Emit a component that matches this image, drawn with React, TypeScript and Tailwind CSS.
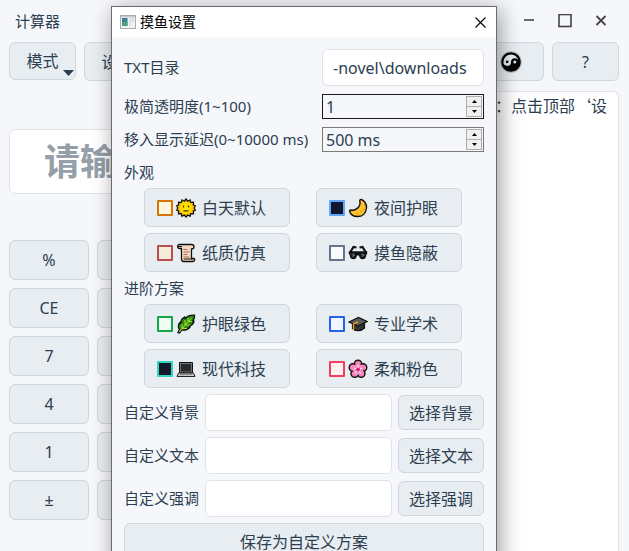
import { ReactNode, useState } from "react";

const keys = ["%", "CE", "7", "4", "1", "±"];

type Preset = {
  name: string;
  swatch: string;
  icon: ReactNode;
};

const Icon = ({ children }: { children: ReactNode }) => (
  <svg viewBox="0 0 20 20" className="w-5 h-5 shrink-0" aria-hidden="true">
    {children}
  </svg>
);

const Sun = () => (
  <Icon>
    <path
      d="M10 1l1.600 2.200L14 1.900l.7 2.500 2.800-.2-.2 2.700 2 .9-1.100 2.200 1.100 2.200-2 .9.2 2.700-2.800-.1-.7 2.500-2.400-1.200L10 19l-1.600-2-2.400 1.200-.7-2.500-2.800.1.2-2.700-2-.9L1.800 10 .7 7.800l2-.9-.2-2.700 2.800.2.7-2.500 2.400 1.300z"
      fill="#ffc800"
      stroke="#111"
      strokeWidth="1.3"
    />
    <circle cx="10" cy="10" r="5.5" fill="#ffe000" />
    <path d="M7.500 7.500v2M12.500 7.500v2M7.500 12.800h5" stroke="#4a3200" strokeWidth="1.2" />
  </Icon>
);

const Scroll = () => (
  <Icon>
    <path
      d="M3.500 1.500h12c2 0 2.500 1 2.500 2.500s-1 2-2.500 2v9.500H18c1 0 1 3-1.500 3h-9c-1.800 0-2-1-2-2.500V5.500H3.500c-2.500 0-2.500-4 0-4z"
      fill="#f8d9c4"
      stroke="#111"
      strokeWidth="1.3"
    />
    <path d="M2 3.500h4M7.500 16h9" stroke="#111" strokeWidth="1" />
    <path d="M7.500 6.500h4M7.500 9h6M7.500 11.500h4M7.500 14h6" stroke="#a0705a" strokeWidth="1" />
  </Icon>
);

const Moon = () => (
  <Icon>
    <path
      d="M13 1.500c2 .3 6 3.500 5.500 8.500-.5 5-4 8.500-9 8.500-4 0-7-2-8-5.500 0-.8.5-1 1.300-1 4.500 1 10.500-3 9-9-.1-.8.2-1.500 1.200-1.500z"
      fill="#ffc22e"
      stroke="#111"
      strokeWidth="1.4"
    />
    <path d="M16 6.500l.8 1M16.500 11l-1 1M12.500 13l1 1M9 16l1-.5" stroke="#e98a00" strokeWidth="1.3" />
  </Icon>
);

const Glasses = () => (
  <Icon>
    <path
      d="M2 9.500l3.500-5.500 3 .5M18 9.500l-3.500-5.500-3 .5"
      fill="none"
      stroke="#111"
      strokeWidth="2.2"
    />
    <path
      d="M.8 8.200h18.400v2.500l-.8 1c-.3 3-1.500 4.600-3.900 4.600-2.200 0-3.200-1.600-3.500-3.800H9c-.3 2.200-1.300 3.800-3.500 3.800-2.400 0-3.600-1.600-3.900-4.600l-.8-1z"
      fill="#111"
    />
    <path
      d="M3.300 11.500l3-.5M4 13.500l3-1.500M13 11.500l3-.5M13.500 13.500l3-1.500"
      stroke="#6e6e6e"
      strokeWidth="1.1"
    />
  </Icon>
);

const Leaf = () => (
  <Icon>
    <path
      d="M2 18.500l1.500-3C1.500 13 2.500 10 4 8.500l1 1.500c-.5-3 1-5.500 3.500-7l.8 1.500C11 2 14.500 1 18.500 1.200c.3 2-.3 4-1.500 5.300l1 .8c-.8 2.500-2.500 4.200-4.500 4.700l.5 1c-2 2.500-5.500 3.500-8.500 3l-2 3z"
      fill="#1d8f14"
      stroke="#111"
      strokeWidth="1.4"
    />
    <path
      d="M3 18L15.500 4M6 14V9.500M6 14.500h5M9 11V6M9.500 11h5M12 7.500V4M12.500 7.500H16"
      fill="none"
      stroke="#b5cf2b"
      strokeWidth="1.1"
    />
  </Icon>
);

const Laptop = () => (
  <Icon>
    <rect x="3" y="3" width="14" height="11.500" rx="1" fill="#111" />
    <rect x="4.500" y="4.500" width="11" height="8.500" fill="#2a2a2a" stroke="#888" strokeWidth=".8" />
    <path d="M2.500 14h15l1.500 3.500H1z" fill="#c6c6c6" stroke="#222" strokeWidth="1" />
    <path d="M4 15.500h12" stroke="#888" strokeWidth="1" />
  </Icon>
);

const Cap = () => (
  <Icon>
    <path
      d="M4.500 8v6.500c2.500 3 8.500 3 12-.5V8z"
      fill="#333"
      stroke="#111"
      strokeWidth="1.2"
    />
    <path d="M1 8l9.500-4.500L19 7.500 10 12z" fill="#5c5c5c" stroke="#111" strokeWidth="1.2" />
    <path d="M10 7.800L5.500 10v6" fill="none" stroke="#e8a71d" strokeWidth="1.3" />
  </Icon>
);

const Blossom = () => (
  <Icon>
    <g fill="#f783bd" stroke="#111" strokeWidth="1.4">
      <circle cx="10" cy="5" r="3.8" />
      <circle cx="15" cy="8.500" r="3.8" />
      <circle cx="13.200" cy="14.500" r="3.8" />
      <circle cx="6.800" cy="14.500" r="3.8" />
      <circle cx="5" cy="8.500" r="3.8" />
    </g>
    <circle cx="10" cy="10.300" r="5.5" fill="#f88fc3" />
    <path
      d="M10 10.500V6M10 10.500l4-1.500M10 10.500l2.500 4M10 10.500l-2.500 4M10 10.500L6 9"
      stroke="#fff"
      strokeWidth=".9"
    />
    <circle cx="10" cy="10.500" r="2" fill="#d6247f" />
  </Icon>
);

const YinYang = () => (
  <svg viewBox="0 0 22 22" className="w-[22px] h-[22px]" aria-hidden="true">
    <circle cx="11" cy="11" r="11" fill="#c3c5c7" />
    <circle cx="11" cy="11" r="9.8" fill="#000" />
    <path d="M3.400 11a7.600 7.600 0 0 1 15.200 0 3.800 3.800 0 0 0-7.600 0 3.800 3.800 0 0 1-7.600 0z" fill="#e9edf1" />
    <circle cx="7.200" cy="10.800" r="1.4" fill="#000" />
    <circle cx="14.800" cy="11" r="1.5" fill="#e9edf1" />
  </svg>
);

const appearance: Preset[] = [
  { name: "白天默认", swatch: "border-[#d97706] bg-[#fef7e0]", icon: <Sun /> },
  { name: "夜间护眼", swatch: "border-[#60a5fa] bg-[#0f172a]", icon: <Moon /> },
  { name: "纸质仿真", swatch: "border-[#b94f4f] bg-[#f4ecd8]", icon: <Scroll /> },
  { name: "摸鱼隐蔽", swatch: "border-[#64748b] bg-[#f8fafc]", icon: <Glasses /> },
];

const advanced: Preset[] = [
  { name: "护眼绿色", swatch: "border-[#16a34a] bg-[#f0fdf4]", icon: <Leaf /> },
  { name: "专业学术", swatch: "border-[#2563eb] bg-[#eff6ff]", icon: <Cap /> },
  { name: "现代科技", swatch: "border-[#2dd4bf] bg-[#111827]", icon: <Laptop /> },
  { name: "柔和粉色", swatch: "border-[#f43f5e] bg-[#fff1f2]", icon: <Blossom /> },
];

const customs = [
  { id: "background", label: "自定义背景", action: "选择背景" },
  { id: "text", label: "自定义文本", action: "选择文本" },
  { id: "accent", label: "自定义强调", action: "选择强调" },
];

const PresetGrid = ({ presets }: { presets: Preset[] }) => (
  <div className="grid grid-cols-2 gap-x-[26px] gap-y-[6px] pl-5 pr-[22px]">
    {presets.map((preset) => (
      <button
        key={preset.name}
        className="h-[39px] flex items-center pl-3 rounded-md border border-[#ced6de] bg-[#e8edf1] text-base"
      >
        <span className={`w-4 h-4 mr-[3px] border-2 rounded-[1px] ${preset.swatch}`}></span>
        {preset.icon}
        <span className="ml-[6px]">{preset.name}</span>
      </button>
    ))}
  </div>
);

type SpinProps = {
  id: string;
  initial: number;
  step: number;
  suffix?: string;
  border: string;
};

const SpinBox = ({ id, initial, step, suffix = "", border }: SpinProps) => {
  const [value, setValue] = useState(initial);

  return (
    <div className={`w-[162px] h-[25px] flex items-center border pr-px ${border}`}>
      <input
        id={id}
        className="flex-1 min-w-0 pl-[3px] text-base leading-5 bg-transparent outline-none"
        value={`${value}${suffix}`}
        onChange={(e) => setValue(parseInt(e.target.value) || 0)}
      />
      <div className="w-4 flex flex-col border border-[#adadad] bg-[#f0f0f0]">
        <button
          aria-label="增加"
          className="h-[10px] flex items-center justify-center border-b border-[#adadad]"
          onClick={() => setValue(value + step)}
        >
          <svg viewBox="0 0 5 3" className="w-[5px] h-[3px]">
            <path d="M0 3L2.500 0 5 3z" fill="#000" />
          </svg>
        </button>
        <button
          aria-label="减少"
          className="h-[9px] flex items-center justify-center"
          onClick={() => setValue(value - step)}
        >
          <svg viewBox="0 0 5 3" className="w-[5px] h-[3px]">
            <path d="M0 0h5L2.500 3z" fill="#000" />
          </svg>
        </button>
      </div>
    </div>
  );
};

const SettingsDialog = () => {
  return (
    <div
      role="dialog"
      aria-label="摸鱼设置"
      className="absolute left-[111px] top-[6px] w-[386px] border border-[#6b6b6b] bg-[#f5f7fb] shadow-[3px_4px_20px_rgba(0,0,0,0.4)]"
    >
      <div className="h-[30px] flex items-center bg-white text-black pl-2 pr-[10px]">
        <svg viewBox="0 0 16 14" className="w-4 h-[14px]" aria-hidden="true">
          <rect x=".5" y=".5" width="15" height="13" fill="#f2f2f2" stroke="#a9adb3" />
          <rect x="1" y="1" width="14" height="1.500" fill="#c3c8ce" />
          <rect x="2" y="3" width="5.500" height="8" fill="#3f7f9c" />
          <rect x="2" y="7" width="5.500" height="4" fill="#4fa277" />
          <rect x="9" y="3" width="2.500" height="8" fill="#dfe2e5" />
          <rect x="12" y="3" width="2" height="4" fill="#c9e6cf" />
        </svg>
        <h2 className="ml-1 text-sm">摸鱼设置</h2>
        <button aria-label="关闭" className="ml-auto">
          <svg viewBox="0 0 11 11" className="w-[11px] h-[11px]">
            <path d="M.5.5l10 10M10.500.5l-10 10" stroke="#000" strokeWidth="1.1" />
          </svg>
        </button>
      </div>

      <div className="px-3 py-3 text-[15px]">
        <div className="flex flex-col gap-2">
          <div className="flex items-center justify-between">
            <label htmlFor="dir">TXT目录</label>
            <input
              id="dir"
              className="w-[162px] h-[37px] px-[10px] rounded-md border border-[#dfe3e8] bg-white text-base"
              defaultValue="-novel\downloads"
            />
          </div>
          <div className="flex items-center justify-between">
            <label htmlFor="opacity">极简透明度(1~100)</label>
            <SpinBox id="opacity" initial={1} step={1} border="border-[#1a1a1a]" />
          </div>
          <div className="flex items-center justify-between">
            <label htmlFor="delay" className="whitespace-nowrap">
              移入显示延迟(0~10000 ms)
            </label>
            <SpinBox id="delay" initial={500} step={50} suffix=" ms" border="border-[#7a7a7a]" />
          </div>
        </div>

        <h3 className="mt-2 mb-1 leading-6">外观</h3>
        <PresetGrid presets={appearance} />

        <h3 className="my-1 leading-6">进阶方案</h3>
        <PresetGrid presets={advanced} />

        <div className="mt-[6px] flex flex-col gap-[6px]">
          {customs.map((custom) => (
            <div key={custom.id} className="flex items-center gap-[6px]">
              <label htmlFor={custom.id}>{custom.label}</label>
              <input
                id={custom.id}
                className="flex-1 min-w-0 h-[37px] px-[10px] rounded-md border border-[#dfe3e8] bg-white text-base"
              />
              <button className="w-[86px] h-[35px] rounded-md border border-[#ced6de] bg-[#e8edf1] text-base">
                {custom.action}
              </button>
            </div>
          ))}
          <button className="h-[37px] rounded-md border border-[#ced6de] bg-[#e8edf1] text-base">
            保存为自定义方案
          </button>
        </div>
      </div>
    </div>
  );
};

const App = () => {
  return (
    <div
      lang="zh-CN"
      className="relative h-screen overflow-hidden flex flex-col bg-[#f5f7fb] text-[#2c3e50] font-['Noto_Sans','Noto_Sans_CJK_SC',sans-serif]"
    >
      <header className="h-[42px] shrink-0 flex items-center pl-[15px] pr-[22px]">
        <h1 className="text-[15px]">计算器</h1>
        <div className="ml-auto flex items-center gap-[23px] text-[#444]">
          <button aria-label="最小化">
            <svg viewBox="0 0 12 14" className="w-3 h-[14px]">
              <path d="M1 6h10" stroke="currentColor" strokeWidth="1.6" />
            </svg>
          </button>
          <button aria-label="最大化">
            <svg viewBox="0 0 14 14" className="w-[14px] h-[14px]">
              <rect x="1" y="0.500" width="12" height="12" fill="none" stroke="currentColor" strokeWidth="1.6" />
            </svg>
          </button>
          <button aria-label="关闭窗口">
            <svg viewBox="0 0 12 12" className="w-3 h-3">
              <path d="M1.500 1l9 9M10.500 1l-9 9" stroke="currentColor" strokeWidth="1.8" />
            </svg>
          </button>
        </div>
      </header>

      <nav className="shrink-0 flex gap-2 pl-[9px] pr-[10px] text-base">
        <button className="relative w-[67px] h-[38px] rounded-md border border-[#ced6de] bg-[#e8edf1]">
          模式
          <svg viewBox="0 0 11 6" className="absolute right-px bottom-[3px] w-[11px] h-[6px]">
            <path d="M0 0h11L5.500 6z" fill="#2c3e50" />
          </svg>
        </button>
        <button className="w-[67px] h-[39px] rounded-md border border-[#ced6de] bg-[#e8edf1]">
          设置
        </button>
        <button
          aria-label="主题"
          className="ml-auto w-[67px] h-[39px] flex items-center justify-center rounded-md border border-[#ced6de] bg-[#e8edf1]"
        >
          <YinYang />
        </button>
        <button className="w-[67px] h-[39px] rounded-md border border-[#ced6de] bg-[#e8edf1]">
          ?
        </button>
      </nav>

      <main className="flex-1 min-h-0 flex gap-2 pt-[10px] pl-[9px] pr-[10px]">
        <section className="w-1/2 shrink-0 pt-[38px]">
          <input
            aria-label="算式"
            placeholder="请输入"
            className="w-full h-[65px] px-[34px] rounded-md border border-[#dfe3e8] bg-white text-4xl font-bold placeholder:text-[#959fa9]"
          />
          <div className="mt-[46px] flex flex-col gap-2">
            {keys.map((key) => (
              <div key={key} className="flex gap-2">
                <button className="w-20 h-10 rounded-md border border-[#ced6de] bg-[#e8edf1] text-base">
                  {key}
                </button>
                <button
                  aria-label={`${key} 备用`}
                  className="w-20 h-10 rounded-md border border-[#ced6de] bg-[#e8edf1]"
                ></button>
              </div>
            ))}
          </div>
        </section>
        <section className="flex-1 min-w-0 pr-[11px] pt-px rounded-t-md border border-b-0 border-[#dfe3e8] bg-white text-right text-base font-['Noto_Sans_CJK_SC',sans-serif]">
          <p>：点击顶部‘设</p>
        </section>
      </main>

      <SettingsDialog />
    </div>
  );
};

export default App;
